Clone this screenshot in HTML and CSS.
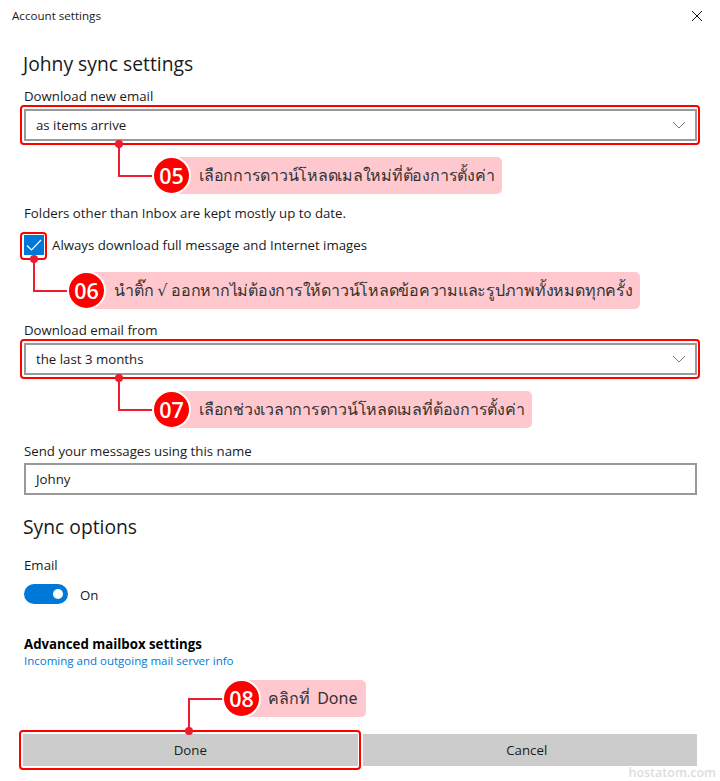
FILE: index.html
```html
<!DOCTYPE html>
<html lang="en">
<head>
<meta charset="utf-8">
<title>Account settings</title>
<link rel="stylesheet" href="styles.css">
</head>
<body>
<div class="window">
  <header class="titlebar">
    <span class="title">Account settings</span>
    <svg class="close" width="12" height="12" viewBox="0 0 12 12"><path d="M1 1l10 10M11 1L1 11" stroke="#111" stroke-width="1" fill="none"/></svg>
  </header>
  <main class="form">
    <h2 class="heading h-sync">Johny sync settings</h2>
    <div class="label l-new">Download new email</div>
    <div class="field select"><span>as items arrive</span>
      <svg class="chev" width="14" height="8" viewBox="0 0 14 8"><path d="M1 1l6 6 6-6" stroke="#777" stroke-width="1" fill="none"/></svg></div>
    <div class="label l-folders">Folders other than Inbox are kept mostly up to date.</div>
    <div class="check-row">
      <span class="checkbox"><svg width="20" height="20" viewBox="0 0 20 20"><path d="M3 10.5l4.5 4.5L17 5" stroke="#fff" stroke-width="1.2" fill="none"/></svg></span>
      <span>Always download full message and Internet images</span>
    </div>
    <div class="label l-from">Download email from</div>
    <div class="field select"><span>the last 3 months</span>
      <svg class="chev" width="14" height="8" viewBox="0 0 14 8"><path d="M1 1l6 6 6-6" stroke="#777" stroke-width="1" fill="none"/></svg></div>
    <div class="label l-send">Send your messages using this name</div>
    <div class="field"><span>Johny</span></div>
    <h2 class="heading h-options">Sync options</h2>
    <div class="label l-email">Email</div>
    <div class="toggle-row"><span class="toggle"><span class="knob"></span></span><span class="on">On</span></div>
    <div class="advanced">Advanced mailbox settings</div>
    <a class="link">Incoming and outgoing mail server info</a>
    <div class="buttons">
      <div class="btn">Done</div>
      <div class="btn btn-cancel"><span>Cancel</span></div>
    </div>
  </main>
</div>

<div class="hl hl-1"></div>
<div class="hl hl-2"></div>
<div class="hl hl-3"></div>
<div class="hl hl-4"></div>

<div class="wire w-5"></div>
<div class="wire w-6"></div>
<div class="wire w-7"></div>
<div class="wire w-8"></div>
<i class="dot d-5"></i><i class="dot d-6"></i><i class="dot d-7"></i><i class="dot d-8"></i>

<div class="note n-5"><b class="num">05</b><span class="thai">เลือกการดาวน์โหลดเมลใหม่ที่ต้องการตั้งค่า</span></div>
<div class="note n-6"><b class="num">06</b><span class="thai">นำติ๊ก √ ออกหากไม่ต้องการให้ดาวน์โหลดข้อความและรูปภาพทั้งหมดทุกครั้ง</span></div>
<div class="note n-7"><b class="num">07</b><span class="thai">เลือกช่วงเวลาการดาวน์โหลดเมลที่ต้องการตั้งค่า</span></div>
<div class="note n-8"><b class="num">08</b><span class="thai">คลิกที่ Done</span></div>

<div class="watermark">hostatom.com</div>
</body>
</html>
```
FILE: styles.css
```css
* { box-sizing: border-box; }
html, body { margin: 0; padding: 0; }
body {
  width: 720px; height: 781px; overflow: hidden; position: relative;
  background: #fff; color: #1a1a1a;
  font-family: "Open Sans", "Noto Sans", sans-serif; font-size: 13.25px;
}
.window { display: flex; flex-direction: column; height: 100%; }
.titlebar { display: flex; justify-content: space-between; align-items: center; height: 32px; padding: 0 17px 0 12px; }
.title { font-size: 11.6px; margin-bottom: 2px; }
.close { display: block; }
.form { display: flex; flex-direction: column; padding: 0 23px 0 24px; }
.heading { margin: 0; font-weight: 400; font-size: 19.3px; line-height: 26px; }
.h-sync { margin-top: 19px; margin-left: -1px; }
.label { line-height: 18px; }
.l-new { margin-top: 10px; margin-bottom: 4px; }
.l-folders { margin-top: 63px; }
.l-from { margin-top: 66px; margin-bottom: 4px; }
.l-send { margin-top: 67px; margin-bottom: 3px; }
.field { height: 32px; border: 2px solid #999; display: flex; align-items: center; justify-content: space-between; padding: 0 10px; background: #fff; }
.chev { display: block; margin-right: -1px; }
.check-row { display: flex; align-items: center; gap: 8px; margin-top: 13px; height: 20px; }
.checkbox { width: 20px; height: 20px; background: #0078d7; display: block; }
.checkbox svg { display: block; }
.h-options { margin-top: 19px; margin-left: -1px; }
.l-email { margin-top: 16px; }
.toggle-row { display: flex; align-items: center; gap: 12px; margin-top: 10px; height: 20px; }
.toggle { width: 44px; height: 20px; border-radius: 10px; background: #0078d7; position: relative; display: block; }
.knob { position: absolute; right: 5px; top: 5px; width: 10px; height: 10px; border-radius: 50%; background: #fff; }
.on { padding-top: 2px; }
.advanced { font-weight: 700; margin-top: 31px; line-height: 18px; color: #000; }
.link { color: #0078d7; font-size: 11.5px; line-height: 16px; }
.buttons { display: flex; gap: 5px; margin-top: 65px; margin-left: -1px; }
.btn { flex: 1; height: 32px; background: #ccc; display: flex; align-items: center; justify-content: center; }
.btn-cancel span { margin-right: 6px; }

.hl { position: absolute; border: 2px solid #f00; border-radius: 4px; }
.hl-1 { left: 20px; top: 105px; width: 680px; height: 40px; }
.hl-2 { left: 20px; top: 232px; width: 27px; height: 28px; }
.hl-3 { left: 20px; top: 339px; width: 680px; height: 40px; }
.hl-4 { left: 19px; top: 730px; width: 342px; height: 40px; }

.wire { position: absolute; border-left: 2px solid #ed1c2e; border-bottom: 2px solid #ed1c2e; }
.w-5 { left: 118px; top: 144px; width: 40px; height: 33px; }
.w-6 { left: 33px; top: 259px; width: 40px; height: 33px; }
.w-7 { left: 118px; top: 378px; width: 40px; height: 33px; }
.w-8 { left: 188px; top: 698px; width: 40px; height: 33px; border-bottom: 0; border-top: 2px solid #ed1c2e; }

.dot { position: absolute; width: 8px; height: 8px; border-radius: 50%; background: #ed1c2e; }
.d-5 { left: 115px; top: 140px; }
.d-6 { left: 30px; top: 255px; }
.d-7 { left: 115px; top: 374px; }
.d-8 { left: 185px; top: 727px; }

.note { position: absolute; display: flex; align-items: center; height: 37px; background: #ffc8ce; border-radius: 0 5px 5px 0; }
.num {
  position: absolute; left: -27px; top: -1px; width: 39px; height: 39px; border-radius: 50%;
  background: #f00; border: 2px solid #fff; color: #fff;
  display: flex; align-items: center; justify-content: center;
  font-family: "Open Sans", sans-serif; font-size: 21.5px; font-weight: 600;
}
.thai { font-family: "Noto Sans", "DejaVu Sans", sans-serif; font-size: 16px; letter-spacing: -.24px; color: #333; padding-left: 20px; white-space: nowrap; }
.n-5 { left: 179px; top: 157px; width: 323px; }
.n-6 { left: 94px; top: 272px; width: 546px; }
.n-7 { left: 179px; top: 391px; width: 353px; }
.n-8 { left: 249px; top: 680px; width: 117px; }
.n-8 .thai { padding-left: 19px; letter-spacing: 0; word-spacing: 3px; }

.watermark { position: absolute; right: 4px; top: 766px; font-size: 12.5px; line-height: 14px; font-weight: 600; color: #ddd; }
```
